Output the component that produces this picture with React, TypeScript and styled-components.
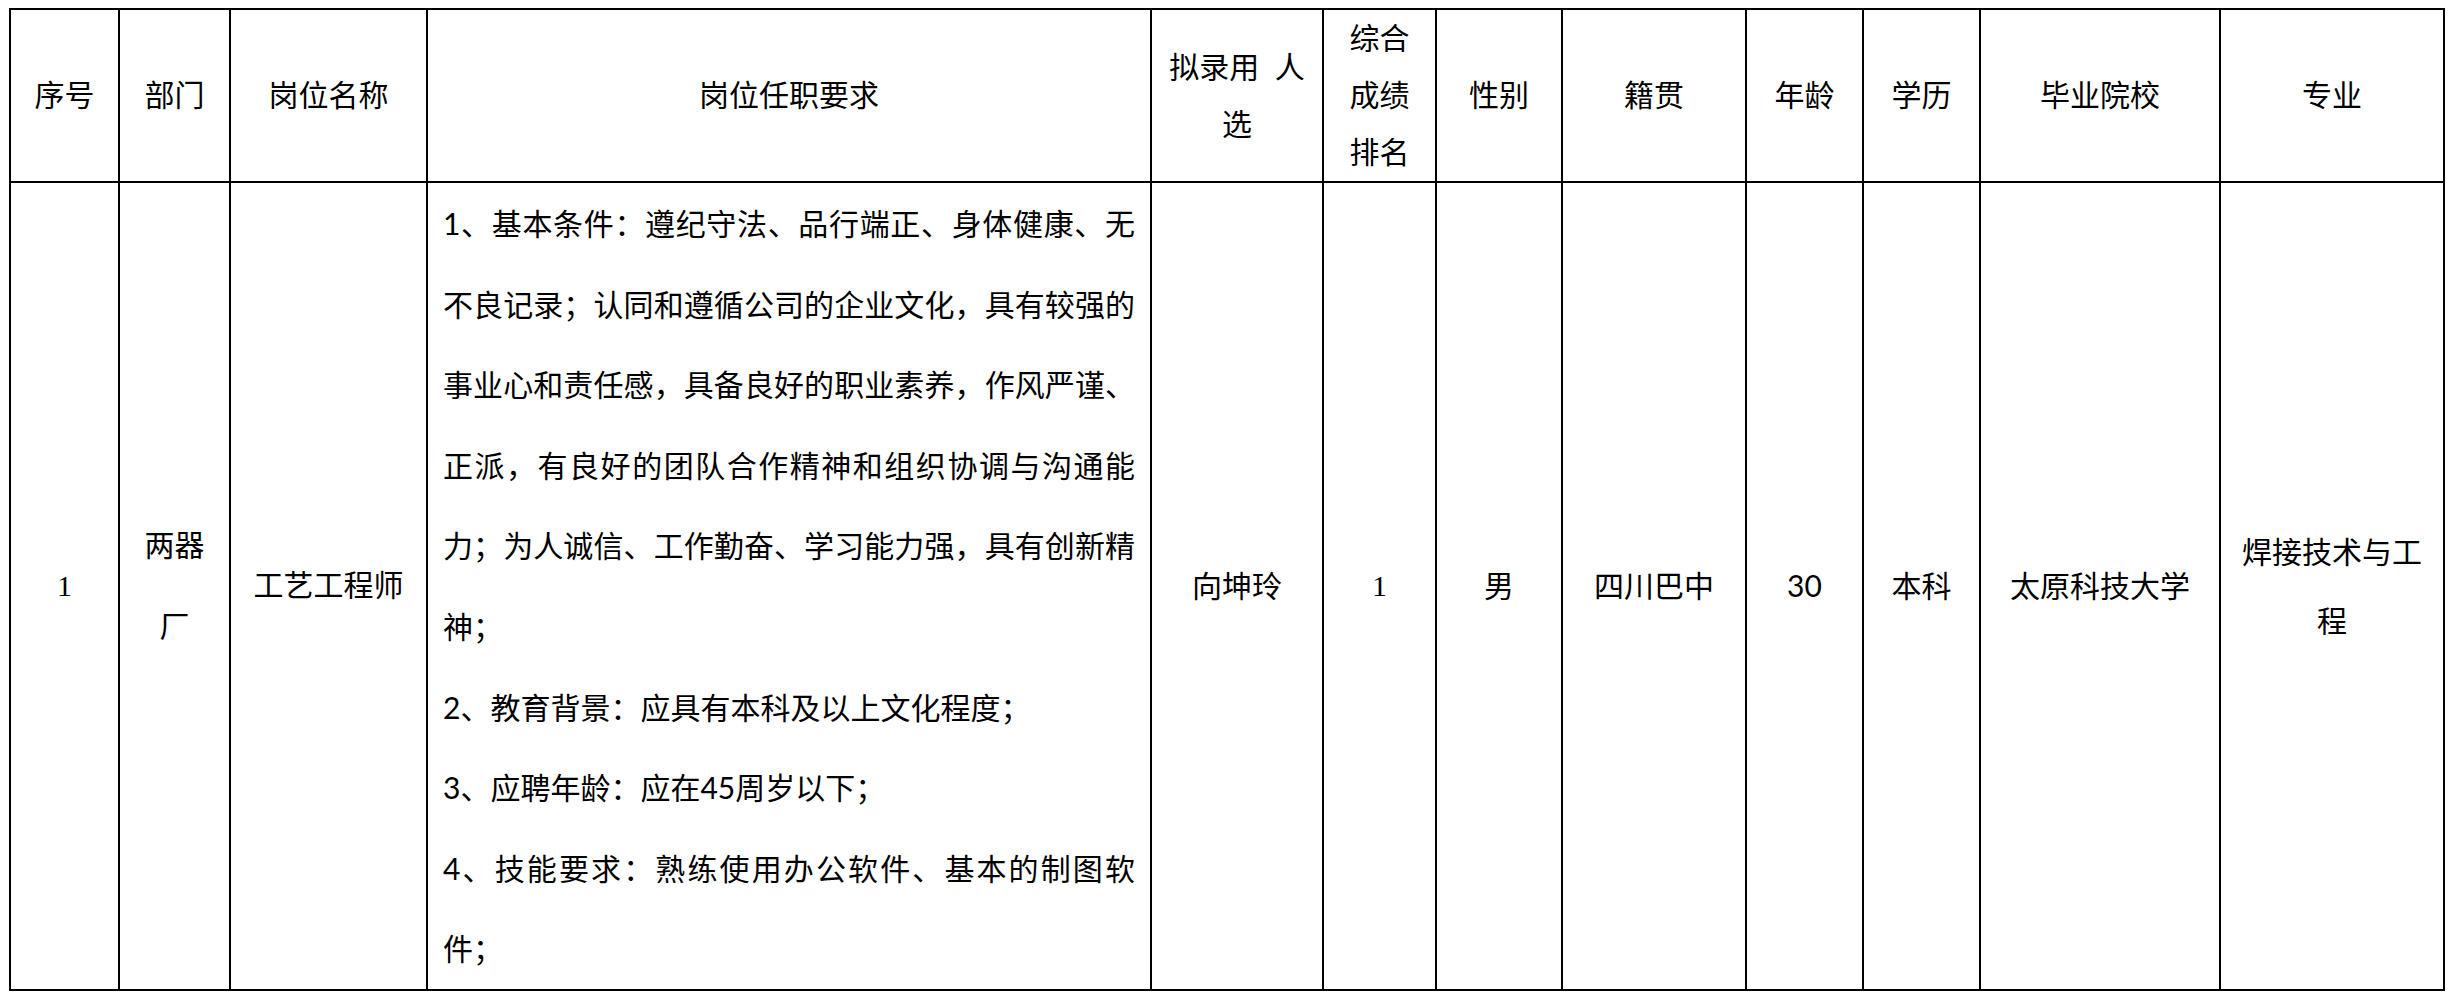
import styled, { createGlobalStyle } from "styled-components";

const GlobalStyle = createGlobalStyle`
  html, body {
    margin: 0;
    padding: 0;
    background: #ffffff;
  }
  body {
    font-family: "Noto Sans CJK SC", sans-serif;
    color: #000000;
  }
`;

const Page = styled.div`
  padding: 8px 0 0 9px;
`;

const Table = styled.table`
  width: 2436px;
  border-collapse: collapse;
  table-layout: fixed;
`;

const HeadCell = styled.th`
  border: 2px solid #000;
  padding: 0 14px;
  height: 171px;
  font-family: "Liberation Serif", "Noto Sans CJK SC", serif;
  font-size: 30px;
  font-weight: 400;
  line-height: 57px;
  word-spacing: 8px;
  text-align: center;
  vertical-align: middle;
`;

const Cell = styled.td<{ $serif?: boolean; $lh?: number }>`
  border: 2px solid #000;
  padding: 0 14px;
  font-family: ${(p) =>
    p.$serif
      ? `"Liberation Serif", "Noto Sans CJK SC", serif`
      : `"Lato", "Noto Sans CJK SC", sans-serif`};
  font-size: 30px;
  font-weight: 400;
  line-height: ${(p) => p.$lh ?? 81}px;
  text-align: center;
  vertical-align: middle;
`;

const ReqCell = styled.td`
  border: 2px solid #000;
  padding: 0 15px;
  font-family: "Lato", "Noto Sans CJK SC", sans-serif;
  font-size: 30px;
  font-weight: 400;
  line-height: 80.6px;
  text-align: justify;
  vertical-align: top;
`;

const ReqPara = styled.p`
  margin: 0;
  line-break: strict;
`;

const widths = [109, 111, 197, 724, 172, 113, 126, 184, 117, 117, 240, 224];

const headers = [
  "序号",
  "部门",
  "岗位名称",
  "岗位任职要求",
  "拟录用 人选",
  "综合成绩排名",
  "性别",
  "籍贯",
  "年龄",
  "学历",
  "毕业院校",
  "专业",
];

const requirements = [
  "1、基本条件：遵纪守法、品行端正、身体健康、无不良记录；认同和遵循公司的企业文化，具有较强的事业心和责任感，具备良好的职业素养，作风严谨、正派，有良好的团队合作精神和组织协调与沟通能力；为人诚信、工作勤奋、学习能力强，具有创新精神；",
  "2、教育背景：应具有本科及以上文化程度；",
  "3、应聘年龄：应在45周岁以下；",
  "4、技能要求：熟练使用办公软件、基本的制图软件；",
];

export default function App() {
  return (
    <>
      <GlobalStyle />
      <Page>
        <Table>
          <colgroup>
            {widths.map((w, i) => (
              <col key={i} style={{ width: w }} />
            ))}
          </colgroup>
          <thead>
            <tr>
              {headers.map((h) => (
                <HeadCell key={h}>{h}</HeadCell>
              ))}
            </tr>
          </thead>
          <tbody>
            <tr>
              <Cell $serif>1</Cell>
              <Cell $serif>两器厂</Cell>
              <Cell $serif>工艺工程师</Cell>
              <ReqCell>
                {requirements.map((r) => (
                  <ReqPara key={r}>{r}</ReqPara>
                ))}
              </ReqCell>
              <Cell>向坤玲</Cell>
              <Cell $serif>1</Cell>
              <Cell>男</Cell>
              <Cell>四川巴中</Cell>
              <Cell>30</Cell>
              <Cell>本科</Cell>
              <Cell>太原科技大学</Cell>
              <Cell $lh={69}>焊接技术与工程</Cell>
            </tr>
          </tbody>
        </Table>
      </Page>
    </>
  );
}
